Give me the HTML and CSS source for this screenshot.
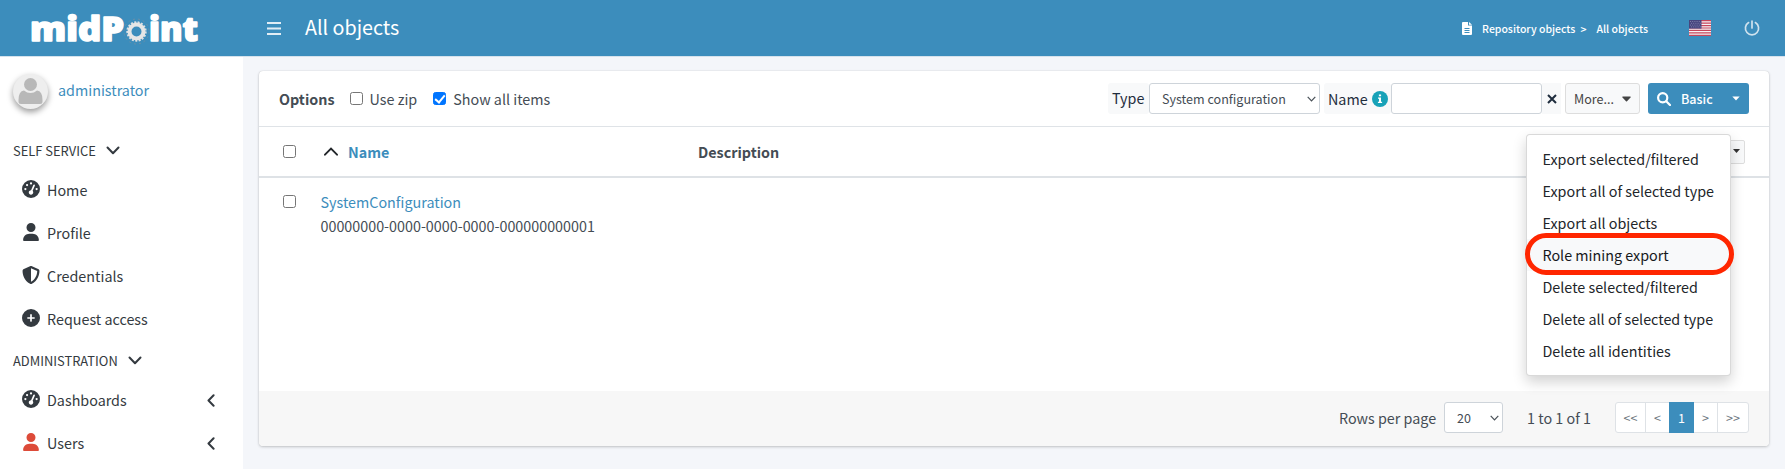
FILE: index.html
```html
<!DOCTYPE html>
<html lang="en">
<head>
<meta charset="utf-8">
<title>All objects</title>
<link rel="stylesheet" href="styles.css">
</head>
<body>
<svg class="defs" width="0" height="0">
  <symbol id="gauge" viewBox="0 0 512 512"><path fill-rule="evenodd" d="M0 256a256 256 0 1 1 512 0A256 256 0 1 1 0 256zM288 96a32 32 0 1 0-64 0 32 32 0 1 0 64 0zM256 416c35.300 0 64-28.700 64-64 0-17.400-6.900-33.100-18.100-44.600L366 161.700c5.300-12.100-.2-26.300-12.300-31.600s-26.300 .2-31.600 12.300L257.900 288H256c-35.300 0-64 28.700-64 64s28.700 64 64 64zM176 144a32 32 0 1 0-64 0 32 32 0 1 0 64 0zM96 288a32 32 0 1 0 0-64 32 32 0 1 0 0 64zm352-32a32 32 0 1 0-64 0 32 32 0 1 0 64 0z"/></symbol>
  <symbol id="user" viewBox="0 0 448 512"><path d="M224 256A128 128 0 1 0 224 0a128 128 0 1 0 0 256zm-45.700 48C79.800 304 0 383.800 0 482.300C0 498.700 13.300 512 29.700 512H418.300c16.400 0 29.700-13.300 29.700-29.700C448 383.800 368.200 304 269.700 304H178.300z"/></symbol>
  <symbol id="shield" viewBox="0 0 512 512"><path fill-rule="evenodd" d="M256 0c4.600 0 9.200 1 13.400 2.900L457.700 82.800c22 9.300 38.400 31 38.300 57.200c-.5 99.200-41.300 280.700-213.600 363.200c-16.700 8-36.100 8-52.800 0C57.300 420.700 16.500 239.200 16 140c-.1-26.200 16.300-47.900 38.300-57.200L242.700 2.900C246.800 1 251.400 0 256 0zm0 66.800V444.800C394 378 431.100 230.100 432 141.400L256 66.800z"/></symbol>
  <symbol id="plus" viewBox="0 0 512 512"><path fill-rule="evenodd" d="M256 512A256 256 0 1 0 256 0a256 256 0 1 0 0 512zM232 344V280H168c-13.300 0-24-10.700-24-24s10.700-24 24-24h64V168c0-13.300 10.700-24 24-24s24 10.700 24 24v64h64c13.300 0 24 10.700 24 24s-10.700 24-24 24H280v64c0 13.300-10.700 24-24 24s-24-10.700-24-24z"/></symbol>
  <symbol id="down" viewBox="0 0 14 9"><path d="M1.500 1.500 7 7.200l5.500-5.700" class="line"/></symbol>
  <symbol id="left" viewBox="0 0 8 13"><path d="M6.600 1.300 1.500 6.500l5.100 5.200" class="line"/></symbol>
</svg>

<header class="navbar">
  <a class="brand">
    <svg width="190" height="56" viewBox="14 0 190 56">
      <text class="brand-text" x="30" y="40.500" textLength="94" lengthAdjust="spacingAndGlyphs">midP</text>
      <text class="brand-text" x="149" y="40.500" textLength="49" lengthAdjust="spacingAndGlyphs">int</text>
      <circle cx="136.500" cy="31.500" r="12.500" class="gear-halo"/>
      <circle cx="136.500" cy="31.500" r="9.200" class="gear-teeth"/>
      <circle cx="136.500" cy="31.500" r="7" class="gear"/>
    </svg>
  </a>
  <svg class="burger" width="14" height="13" viewBox="0 0 14 13"><path d="M0 1h14M0 6.500h14M0 12h14"/></svg>
  <h1 class="title">All objects</h1>
  <nav class="crumbs">
    <svg width="10" height="13" viewBox="0 0 10 13"><path fill="#fff" d="M1 0h5v3.500h4V12a1 1 0 0 1-1 1H1a1 1 0 0 1-1-1V1a1 1 0 0 1 1-1zM7 0l3 2.800H7z"/><path d="M2.500 6.500h5M2.500 8.500h5M2.500 10.500h5" stroke="#3c8dbc"/></svg>
    <span class="crumb-a">Repository objects</span><span class="crumb-sep">&gt;</span><span>All objects</span>
  </nav>
  <svg class="flag" width="22" height="16" viewBox="0 0 22 16"><path fill="#f5f3f5" d="M0 0h22v16H0z"/><path stroke="#c8455a" stroke-width="1.230" d="M0 .6h22M0 3.080h22M0 5.540h22M0 8h22M0 10.460h22M0 12.920h22M0 15.380h22"/><path fill="#46467f" d="M0 0h12.500v8.600H0z"/><path stroke="#8c8cb4" stroke-width=".8" stroke-dasharray="1 1.200" d="M1 1.500h11M2 3.300h10M1 5.100h11M2 6.900h10"/></svg>
  <svg class="power" width="16" height="16" viewBox="0 0 16 16"><path d="M8 1v7M4.600 2.600a6.600 6.600 0 1 0 6.800 0"/></svg>
</header>

<div class="layout">
  <aside class="sidebar">
    <div class="user">
      <span class="avatar"><svg width="25" height="27" viewBox="0 0 25 27"><circle cx="12.500" cy="6.500" r="6.500"/><path d="M6 12.500Q9 15 12.500 15t6.500-2.500Q24.500 13 24.500 22v1.500q0 2.500-2.500 2.500H3Q.5 26 .5 23.500V22Q.5 13 6 12.500z"/></svg></span>
      <a class="link">administrator</a>
    </div>
    <div class="nav-head">SELF SERVICE <svg width="14" height="9"><use href="#down"/></svg></div>
    <div class="nav-item"><svg class="ico" width="18" height="18"><use href="#gauge"/></svg>Home</div>
    <div class="nav-item"><svg class="ico" width="18" height="18"><use href="#user"/></svg>Profile</div>
    <div class="nav-item"><svg class="ico" width="18" height="18"><use href="#shield"/></svg>Credentials</div>
    <div class="nav-item"><svg class="ico" width="18" height="18"><use href="#plus"/></svg>Request access</div>
    <div class="nav-head">ADMINISTRATION <svg width="14" height="9"><use href="#down"/></svg></div>
    <div class="nav-item"><svg class="ico" width="18" height="18"><use href="#gauge"/></svg>Dashboards<svg class="more" width="8" height="13"><use href="#left"/></svg></div>
    <div class="nav-item"><svg class="ico red" width="18" height="18"><use href="#user"/></svg>Users<svg class="more" width="8" height="13"><use href="#left"/></svg></div>
  </aside>

  <main class="content">
    <section class="card">
      <div class="toolbar">
        <b class="options">Options</b>
        <label class="opt"><input type="checkbox" class="check">Use zip</label>
        <label class="opt"><input type="checkbox" class="check" checked>Show all items</label>
        <div class="search">
          <span class="label">Type</span>
          <div class="select type">System configuration<svg width="9" height="6" viewBox="0 0 9 6"><path d="M.7.8 4.500 4.800 8.300.8"/></svg></div>
          <span class="label name">Name<svg width="16" height="16" viewBox="0 0 16 16"><circle cx="8" cy="8" r="8" fill="#17a2b8"/><path fill="#fff" d="M6.900 3.400h2.200v1.900H6.900zM6 6.500h3v4.200h1.100V12H5.900v-1.300H7V7.800H6z"/></svg></span>
          <input class="field" type="text">
          <span class="clear"><svg width="10" height="10" viewBox="0 0 10 10"><path d="M1 1l8 8M9 1 1 9"/></svg></span>
          <span class="btn-more">More...<svg width="9" height="6" viewBox="0 0 9 6"><path d="M.8.500h7.400q.8.200.3.900L5 5.300q-.5.400-1 0L.5 1.400Q0 .7.800.5z"/></svg></span>
          <span class="btn-basic"><svg width="14" height="14" viewBox="0 0 14 14"><circle cx="5.700" cy="5.700" r="4.600"/><path d="M9.200 9.200 13 13"/></svg><span>Basic</span><svg class="tri" width="8" height="5" viewBox="0 0 8 5"><path d="M.3.400h7.400L4 4.600z"/></svg></span>
        </div>
      </div>

      <div class="row head">
        <input type="checkbox" class="check">
        <div class="col-name"><svg width="14" height="9" viewBox="0 0 14 9"><path d="M1 7.700 7 1.600l6 6.100"/></svg><b>Name</b></div>
        <b class="col-desc">Description</b>
        <div class="actions">
          <span class="toggle"><svg width="7" height="4" viewBox="0 0 7 4"><path d="M0 0h7L3.500 4z"/></svg></span>
          <ul class="menu">
            <li>Export selected/filtered</li>
            <li>Export all of selected type</li>
            <li>Export all objects</li>
            <li class="active">Role mining export</li>
            <li>Delete selected/filtered</li>
            <li>Delete all of selected type</li>
            <li>Delete all identities</li>
          </ul>
        </div>
      </div>

      <div class="row body">
        <input type="checkbox" class="check">
        <div class="col-object"><a class="link">SystemConfiguration</a><span>00000000-0000-0000-0000-000000000001</span></div>
      </div>

      <footer class="foot">
        <span class="rows">Rows per page</span>
        <div class="select size">20<svg width="9" height="6" viewBox="0 0 9 6"><path d="M.7.8 4.500 4.800 8.300.8"/></svg></div>
        <span class="count">1 to 1 of 1</span>
        <div class="pages"><span class="edge">&lt;&lt;</span><span>&lt;</span><span class="current">1</span><span>&gt;</span><span class="edge">&gt;&gt;</span></div>
      </footer>
    </section>
  </main>
</div>
</body>
</html>
```

FILE: styles.css
```css
* { box-sizing: border-box; }
body {
  margin: 0;
  height: 469px;
  overflow: hidden;
  background: #f4f6fa;
  color: #444c54;
  font: 14.33px/24px "Noto Sans CJK SC", "Noto Sans", sans-serif;
}
svg { display: block; flex: none; }
.defs { position: absolute; }
.link { color: #3c8dbc; }

.navbar {
  display: flex;
  align-items: center;
  height: 57px;
  background: #3c8dbc;
  border-bottom: 1px solid #d5e2ec;
  color: #fff;
}
.brand { width: 243px; padding-left: 14px; }
.brand-text { font: 800 33px "Open Sans", sans-serif; fill: #fff; stroke: #fff; stroke-width: 1.500; stroke-linejoin: round; }
.gear-halo { fill: none; stroke: #6b8fa8; stroke-width: 1; stroke-dasharray: 2 3; }
.gear-teeth { fill: none; stroke: #dcdfe2; stroke-width: 2; stroke-dasharray: 2 1.400; }
.gear { fill: none; stroke: #e6e6e6; stroke-width: 4; }
.burger { margin-left: 24px; stroke: #e1edf5; stroke-width: 1.800; }
.title { margin: 0 0 2px 24px; font-size: 19.700px; font-weight: 400; line-height: 28px; }
.crumbs { display: flex; align-items: center; margin-left: auto; padding-top: 1px; font-size: 10.500px; font-weight: 500; line-height: 20px; }
.crumb-a { margin-left: 10px; }
.crumb-sep { margin: 0 10px 0 5px; }
.flag { margin-left: 41px; }
.power { margin: 0 25px 0 33px; fill: none; stroke: #cfe2ee; stroke-width: 1.700; stroke-linecap: round; }

.layout { display: flex; height: 412px; }
.sidebar { width: 243px; background: #fff; color: #343a40; overflow: hidden; }
.user { display: flex; align-items: center; gap: 10px; height: 74px; padding: 0 0 6px 13px; }
.user .link { margin-bottom: 2px; }
.avatar {
  display: flex; align-items: center; justify-content: center;
  width: 35px; height: 35px; border-radius: 50%;
  background: #eee; box-shadow: 0 3px 6px rgba(0, 0, 0, .4);
}
.avatar svg { fill: #b8b8b8; }
.line { fill: none; stroke: #343a40; stroke-width: 2; stroke-linecap: round; stroke-linejoin: round; }
.nav-head { display: flex; align-items: center; gap: 10px; height: 37.500px; padding: 2px 0 0 13px; font-size: 12.900px; }
.nav-item { display: flex; align-items: center; height: 43.150px; padding: 0 28px 0 22px; }
.ico { margin: 0 7px 3px 0; fill: #343a40; }
.red { fill: #dd4b39; }
.more { margin-left: auto; }

.content { flex: 1; padding: 14px 16px 0; }
.card {
  display: flex; flex-direction: column;
  height: 375px; border-radius: 4px; background: #fff;
  box-shadow: 0 0 1px rgba(0, 0, 0, .2), 0 1px 3px rgba(0, 0, 0, .2);
}
.toolbar { display: flex; align-items: center; height: 56px; padding: 0 20px; border-bottom: 1px solid #dfe3e7; }
.options { margin-right: 15px; }
.opt { display: flex; align-items: center; gap: 7px; margin-right: 16px; }
.check {
  appearance: none; flex: none; width: 13px; height: 13px; margin: 0;
  border: 1px solid #767676; border-radius: 2.500px; background: #fff;
}
.check:checked {
  border-color: #0075ff;
  background: #0075ff;
  display: grid; place-items: center;
}
.check:checked::after {
  content: ""; width: 4px; height: 8px; margin-top: -2px;
  border: solid #fff; border-width: 0 2px 2px 0; transform: rotate(40deg);
}
.search { display: flex; align-items: center; margin-left: auto; height: 31px; line-height: 29px; }
.label { height: 31px; width: 41px; padding-left: 4px; background: #f8f9fa; color: #1f2d3d; line-height: 30px; border-radius: 3px; }
.name { display: flex; align-items: center; gap: 4px; width: 67px; margin-left: 4px; padding-left: 4px; }
.select {
  display: flex; align-items: center; justify-content: space-between;
  height: 31px; padding: 0 3px 0 12px;
  border: 1px solid #ced4da; border-radius: 3px; background: #fff; font-size: 12.540px;
}
.select svg { fill: none; stroke: #495057; stroke-width: 1.200; }
.type { width: 171px; }
.field { width: 151px; height: 31px; padding: 0; border: 1px solid #ced4da; border-radius: 3px; background: #fff; }
.clear { display: grid; place-items: center; width: 19px; height: 31px; background: #f8f9fa; }
.clear svg { stroke: #1f2d3d; stroke-width: 2; }
.btn-more {
  display: flex; align-items: center; gap: 8px; width: 75px; height: 31px; margin: 0 8px 0 4px; padding-left: 8px;
  border: 1px solid #ddd; border-radius: 3px; background: #f8f9fa; color: #444; font-size: 12.540px;
}
.btn-more svg { fill: #444; }
.btn-basic {
  display: flex; align-items: center; width: 101px; height: 31px; padding: 0 9px;
  border-radius: 3px; background: #3c8dbc; color: #fff; font-size: 12.540px; font-weight: 500;
}
.btn-basic span { margin-left: 10px; }
.btn-basic svg { fill: none; stroke: #fff; stroke-width: 2.200; stroke-linecap: round; }
.btn-basic .tri { margin-left: auto; fill: #fff; stroke: none; }

.row { display: flex; padding-left: 24px; }
.head { align-items: center; height: 51px; border-bottom: 2px solid #dee2e6; }
.col-name { display: flex; align-items: center; gap: 10px; width: 374px; margin-left: 28px; color: #3c8dbc; }
.col-name svg { fill: none; stroke: #212529; stroke-width: 1.900; stroke-linecap: round; }
.actions { position: relative; margin: 1px 24px 0 auto; }
.toggle {
  display: flex; align-items: center; justify-content: flex-end; width: 30px; height: 24px; padding: 0 4px 2px 0;
  border: 1px solid #ddd; border-radius: 2px; background: #f8f9fa;
}
.toggle svg { fill: #333; }
.menu {
  position: absolute; top: -6px; right: 14px; z-index: 2;
  width: 205px; margin: 0; padding: 8px 0; list-style: none;
  border: 1px solid rgba(0, 0, 0, .15); border-radius: 4px;
  background: #fff; color: #212529; line-height: 32px;
  box-shadow: 0 6px 14px rgba(0, 0, 0, .18);
}
.menu li { height: 32px; padding-left: 15.500px; white-space: nowrap; }
.menu .active { position: relative; background: #f8f9fa; color: #16181b; }
.active::after {
  content: ""; position: absolute; inset: -6px -4px -4px -2px;
  border: 5px solid #ff2600; border-radius: 21px;
}
.body { flex: 1; padding-top: 12px; }
.body .check { margin-top: 5px; }
.col-object { display: flex; flex-direction: column; margin-left: 24.500px; }

.foot {
  display: flex; align-items: center; height: 55px; padding: 0 20px 2px 0; justify-content: flex-end;
  background: #f7f7f7; border-radius: 0 0 4px 4px;
}
.size { width: 59px; margin: 0 24px 0 8px; }
.pages { display: flex; height: 31px; margin-left: 24px; border: 1px solid #dee2e6; border-radius: 3px; background: #fff; color: #6c757d; font-size: 12.540px; line-height: 29px; text-align: center; }
.pages span { width: 24px; border-right: 1px solid #dee2e6; }
.pages .edge { width: 30px; }
.pages span:last-child { border-right: 0; }
.pages .current { width: 25px; margin: -1px 0 -1px -1px; border: 0; background: #3c8dbc; color: #fff; line-height: 31px; }
```
